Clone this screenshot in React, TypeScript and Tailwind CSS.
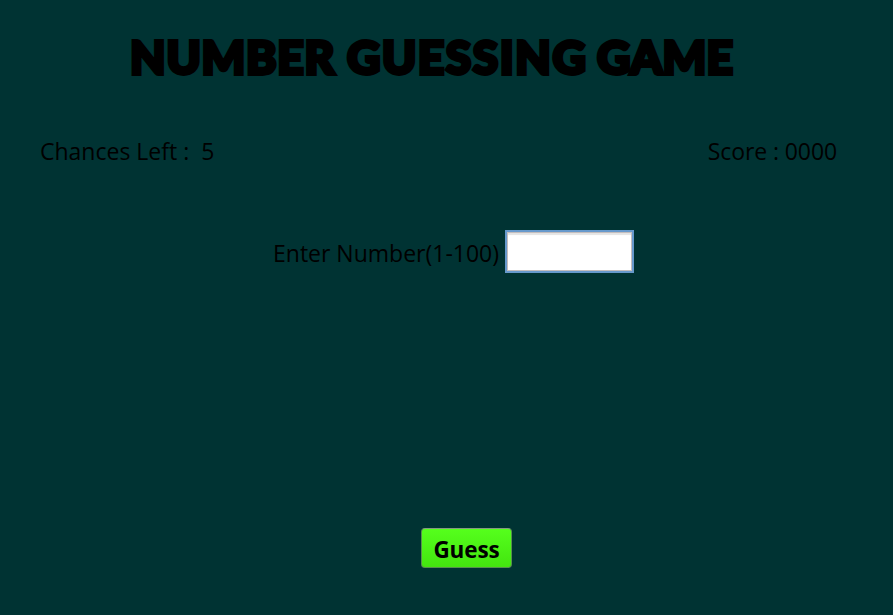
export default function App() {
  return (
    <main className="flex h-[615px] w-[893px] flex-col overflow-hidden bg-[#003333] font-['Open_Sans','Noto_Sans',sans-serif] text-black">
      <h1 className="mt-[22px] ml-[130px] flex h-[70px] font-['Lato',sans-serif] text-[46px] leading-[70px] font-black whitespace-pre [-webkit-text-stroke:3.8px_black]">
        <span className="w-[217px] tracking-[0.8px]">NUMBER </span>
        <span className="w-[250px] tracking-[1.6px]">GUESSING </span>
        <span className="tracking-[0px] [font-kerning:none]">GAME</span>
      </h1>
      <div className="mt-[41px] flex h-[36px] justify-between pr-[56px] pl-[40px] text-[23px] leading-[36px]">
        <p className="whitespace-pre">Chances Left :  5</p>
        <p className="tracking-[-0.1px]">Score : 0000</p>
      </div>
      <label className="mt-[61px] ml-[273px] flex h-[43px] items-center text-[23px]">
        <span className="mt-[4px] w-[232px]">Enter Number(1-100)</span>
        <input className="h-[43px] w-[129px] border-2 border-[#6799cc] bg-white shadow-[inset_0_0_0_1px_#c4bdbd,inset_0_3px_1px_#e4e4e4] outline-none" />
      </label>
      <button className="mt-[255px] ml-[421px] h-[40px] w-[91px] rounded-[4px] border border-[#58904d] border-t-[#839b7e] bg-linear-to-b from-[#55ff1c] to-[#43e50f] pt-[3px] text-[22.5px] font-bold tracking-[-0.1px]">Guess</button>
    </main>
  );
}
